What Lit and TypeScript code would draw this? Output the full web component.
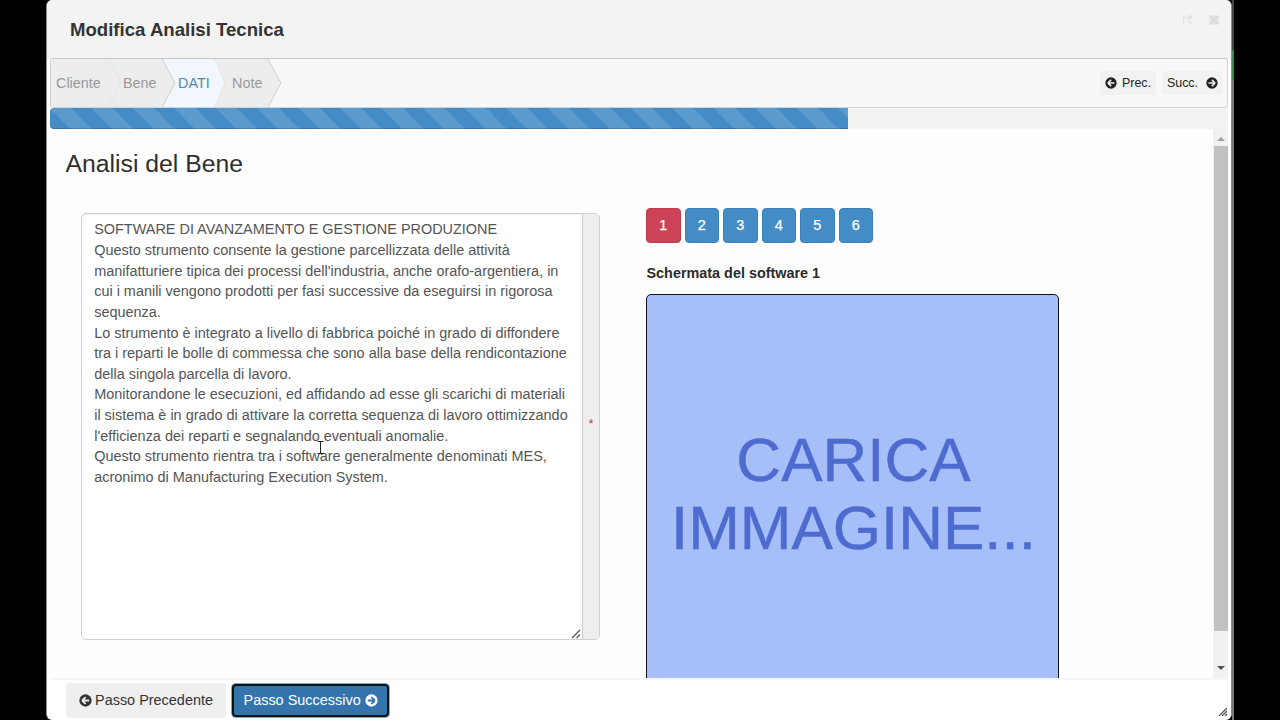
import { LitElement, html, css } from "lit";
import { customElement, state } from "lit/decorators.js";
import { classMap } from "lit/directives/class-map.js";

const arrowCircle = (dir: "left" | "right") => html`
  <svg class="ico ${dir}" viewBox="0 0 14 14">
    <circle cx="7" cy="7" r="6.6" fill="currentColor" />
    <path class="cut" d="M3.300 7 L7.200 3.300 M3.300 7 L7.200 10.700 M3.500 7 H11" fill="none" stroke-width="1.900" />
  </svg>`;

@customElement("app-root")
export class AppRoot extends LitElement {
  static styles = css`
    :host { display: block; width: 1280px; height: 720px; background: #000; overflow: hidden;
      font-family: "Liberation Sans", Arial, sans-serif; font-size: 14.4px; color: #333; }
    * { box-sizing: border-box; }
    .desk { height: 720px; padding: 0 46px; display: flex; }
    .window { flex: none; width: 1186px; height: 720px; background: #fff; border: solid #8a8a8a; border-width: 0 1px;
      border-radius: 6px; display: flex; flex-direction: column; padding: 0 3px; position: relative; overflow: hidden; }
    .edge { width: 2px; height: 720px; background: linear-gradient(#444 0 50px, #3b8a4b 50px 80px, #777 80px 720px); }
    .title { flex: none; height: 59px; margin: 0 -3px; padding: 1px 12px 0 23px; background: #f3f3f3;
      display: flex; align-items: center; }
    .title h1 { margin: 0; flex: 1; font-size: 18.6px; font-weight: bold; color: #333; line-height: 22px; }
    .winbtns { display: flex; gap: 17px; align-self: flex-start; padding-top: 14px; }
    .winbtns svg { width: 10px; height: 10px; display: block; }
    .wizard { flex: none; height: 50px; border: 1px solid #d2d2d2; border-top-color: #c6c6c6; border-radius: 3px;
      margin-top: -1px; background: #f8f8f8; display: flex; align-items: stretch; }
    .step { position: relative; height: 48px; line-height: 48px; color: #999; background: #ededed; white-space: nowrap; }
    .step.on { color: #5b87a3; background: #f1f7fd; }
    .step svg { position: absolute; left: 100%; top: 0; width: 14px; height: 48px; z-index: 1; }
    .step span { display: block; }
    .nav { margin-left: auto; display: flex; gap: 6px; align-items: center; padding-right: 4px; }
    .mini { height: 24px; padding: 0 5px; background: #f2f2f2; border-radius: 3px; display: flex; align-items: center;
      gap: 5px; font-size: 12.4px; color: #222; --cut: #f2f2f2; }
    .mini.succ { gap: 8px; }
    .mini .ico { width: 12px; height: 12px; }
    .ico { display: block; width: 13px; height: 13px; flex: none; }
    .ico.right { transform: scaleX(-1); }
    .cut { stroke: var(--cut); }
    .track { flex: none; height: 21px; background: #f2f2f2; border-radius: 4px; display: flex; }
    .bar { border-radius: 4px 0 0 4px; background-color: #438cc6;
      background-image: linear-gradient(45deg, rgba(255,255,255,.12) 25%, transparent 25%, transparent 50%, rgba(255,255,255,.12) 50%, rgba(255,255,255,.12) 75%, transparent 75%);
      background-size: 41.5px 41.5px; box-shadow: inset 0 -1px 0 rgba(0,0,0,.16); }
    .body { flex: none; height: 549px; display: flex; overflow: hidden; }
    .content { flex: 1; overflow: hidden; padding-left: 15.5px; background: #fefefe; }
    h2 { margin: 0; padding-top: 20px; font-weight: normal; font-size: 24.75px; line-height: 30px; color: #2e2e2e; }
    .cols { display: flex; padding: 34px 0 0 15.5px; }
    .field { flex: none; width: 519px; height: 427px; border: 1px solid #d0d0d0; border-radius: 5px; display: flex; overflow: hidden;
      background: #fff; box-shadow: inset 0 1px 1px rgba(0,0,0,.06); }
    .area { flex: 1; position: relative; padding: 5.4px 0 0 12.2px; font-size: 14.44px; line-height: 20.62px; color: #555; white-space: nowrap; }
    .grip { position: absolute; right: 0; bottom: 0; width: 11px; height: 10px; }
    .addon { flex: none; width: 17px; border-left: 1px solid #ccc; background: #eee; display: flex; align-items: center; justify-content: center;
      color: #c2304a; font-size: 12px; padding-bottom: 6px; }
    .cursor { position: absolute; left: 234px; top: 226px; width: 9px; height: 16px; }
    .shots { padding-left: 46px; margin-top: -5px; width: 462px; }
    .pages { display: flex; gap: 4px; }
    .page { width: 34.5px; height: 35px; border: 1px solid #3b80b8; border-radius: 4px; background: #438cc6; color: #fff;
      display: flex; align-items: center; justify-content: center; padding-bottom: 2px; -webkit-text-stroke: .25px #fff; }
    .page.cur { background: #cc4358; border-color: #c03a50; }
    .label { font-weight: bold; line-height: 20px; margin-top: 20px; color: #2b2b2b; white-space: nowrap; padding-left: .5px; }
    .drop { margin-top: 11px; width: 413px; height: 412px; border: 1px solid #111; border-radius: 5px; background: #a6bff9; color: #4e6bd0;
      font-size: 62px; line-height: 67.5px; text-align: center; padding: 131px 0 0 2px; -webkit-text-stroke: .5px #4e6bd0; white-space: nowrap; }
    .scroll { flex: none; width: 15px; background: #f1f1f1; display: flex; flex-direction: column; align-items: center; }
    .thumb { width: 14px; height: 485px; background: #c1c1c1; }
    .sb { height: 17px; display: flex; align-items: center; padding-top: 3px; }
    .sb.end { margin-top: auto; padding: 0 0 1px; height: 20px; }
    .sb svg { width: 8px; height: 4px; display: block; }
    .foot { flex: 1; border-top: 2px solid #f6f6f6; padding: 3px 0 0 16px; display: flex; gap: 5px; }
    .btn { display: flex; align-items: center; gap: 3px; white-space: nowrap; font-size: 14.45px; }
    .prev { height: 35px; width: 160px; padding: 0 0 1px 13px; background: #efefef; border-radius: 3px; --cut: #efefef; color: #333; }
    .next { padding: 0 0 1px 9.5px; gap: 4px; background: #3474ad; color: #fff; --cut: #3474ad; border: 2px solid #0b1218;
      border-radius: 4px; box-shadow: 0 0 0 1px #86a9c4; margin: 1px 0 0 1px; height: 33px; width: 157px; }
    .resize { position: absolute; right: 4px; bottom: 4px; width: 9px; height: 8px; }
  `;

  @state() private current = 1;

  private steps = [
    { label: "Cliente", w: 57, pad: 5, tip: 13 },
    { label: "Bene", w: 54, pad: 15, tip: 13 },
    { label: "DATI", w: 53, pad: 16, tip: 10 },
    { label: "Note", w: 53, pad: 17, tip: 13 },
  ];

  private lines = [
    "SOFTWARE DI AVANZAMENTO E GESTIONE PRODUZIONE",
    "Questo strumento consente la gestione parcellizzata delle attività",
    "manifatturiere tipica dei processi dell'industria, anche orafo-argentiera, in",
    "cui i manili vengono prodotti per fasi successive da eseguirsi in rigorosa",
    "sequenza.",
    "Lo strumento è integrato a livello di fabbrica poiché in grado di diffondere",
    "tra i reparti le bolle di commessa che sono alla base della rendicontazione",
    "della singola parcella di lavoro.",
    "Monitorandone le esecuzioni, ed affidando ad esse gli scarichi di materiali",
    "il sistema è in grado di attivare la corretta sequenza di lavoro ottimizzando",
    "l'efficienza dei reparti e segnalando eventuali anomalie.",
    "Questo strumento rientra tra i software generalmente denominati MES,",
    "acronimo di Manufacturing Execution System.",
  ];

  render() {
    return html`<div class="desk">
      <div class="window">
        <div class="title"><h1>Modifica Analisi Tecnica</h1>
          <div class="winbtns">
            <svg viewBox="0 0 10 10" fill="none" stroke="#dedede" stroke-width="1.2"><path d="M4 2.500H1.500V9M8 9V5M5 5l3.500-3.500M6 1h3v3" /></svg>
            <svg viewBox="0 0 10 10"><rect x=".5" y=".5" width="9" height="9" fill="#dcdcdc" /><path d="M5 0V2.500M5 7.500V10M0 5H2.500M7.500 5H10" stroke="#f0f0f0" stroke-width="1.2" /></svg>
          </div>
        </div>
        <div class="wizard">
          ${this.steps.map((s, i) => html`<div class=${classMap({ step: true, on: i === 2 })} style="width:${s.w}px;padding-left:${s.pad}px">
            <span>${s.label}</span>
            <svg viewBox="0 0 14 48">
              <path d="M-1 0H0L${s.tip} 24L0 48H-1Z" fill=${i === 2 ? "#f1f7fd" : "#ededed"} />
              <path d="M0 0L${s.tip} 24L0 48" fill="none" stroke=${i === 0 || i === 2 ? "#e4e4e4" : "#cfcfcf"} />
            </svg></div>`)}
          <div class="nav">
            <div class="mini">${arrowCircle("left")}<span>Prec.</span></div>
            <div class="mini succ"><span>Succ.</span>${arrowCircle("right")}</div>
          </div>
        </div>
        <div class="track"><div class="bar" style="width:798px"></div></div>
        <div class="body">
          <div class="content">
            <h2>Analisi del Bene</h2>
            <div class="cols">
              <div class="field">
                <div class="area">${this.lines.map((t) => html`<div>${t}</div>`)}
                  <svg class="cursor" viewBox="0 0 9 16" fill="none" stroke="#222"><path d="M1.500 1.500H7.500M4.500 1.500V13.500M1.500 13.500H7.500" /></svg>
                  <svg class="grip" viewBox="0 0 11 10" stroke="#555" fill="none" stroke-width="1.2"><path d="M1 9L9 1M5.500 9L9 5.500" /></svg>
                </div>
                <div class="addon">*</div>
              </div>
              <div class="shots">
                <div class="pages">${[1, 2, 3, 4, 5, 6].map((n) => html`<div class=${classMap({ page: true, cur: n === this.current })} @click=${() => (this.current = n)}>${n}</div>`)}</div>
                <div class="label">Schermata del software ${this.current}</div>
                <div class="drop">CARICA<br />IMMAGINE...</div>
              </div>
            </div>
          </div>
          <div class="scroll">
            <div class="sb"><svg viewBox="0 0 8 4"><path d="M0 4L4 0L8 4Z" fill="#a0a0a0" /></svg></div>
            <div class="thumb"></div>
            <div class="sb end"><svg viewBox="0 0 8 4"><path d="M0 0L4 4L8 0Z" fill="#505050" /></svg></div>
          </div>
        </div>
        <div class="foot">
          <div class="btn prev">${arrowCircle("left")}<span>Passo Precedente</span></div>
          <div class="btn next"><span>Passo Successivo</span>${arrowCircle("right")}</div>
        </div>
        <svg class="resize" viewBox="0 0 9 8" stroke="#555" fill="none"><path d="M1 8L9 0M4 8L9 3M7 8L9 6" stroke-width="1.300" /></svg>
      </div>
      <div class="edge"></div>
    </div>`;
  }
}
